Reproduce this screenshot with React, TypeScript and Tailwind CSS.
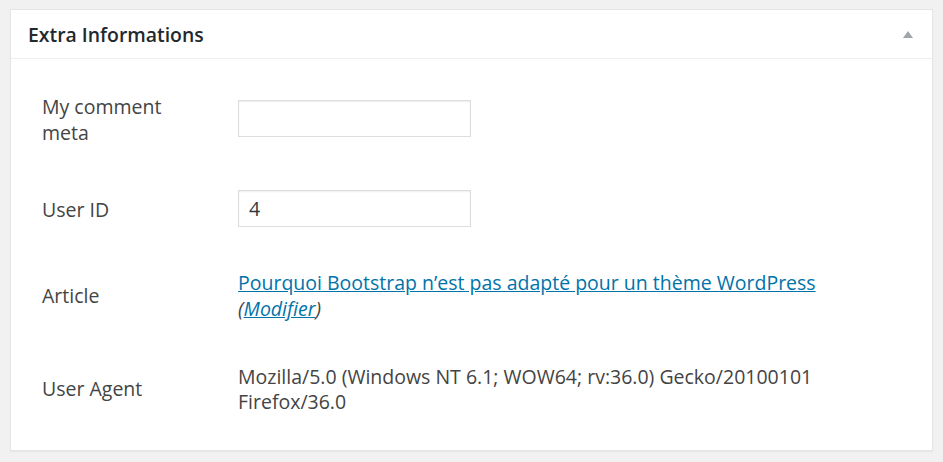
export default function App() {
  const font = { fontFamily: '"Open Sans", "Noto Sans", sans-serif' };

  return (
    <div className="min-h-[462px] w-[943px] bg-[#f1f1f1] pt-[9px] pl-[10px]" style={font}>
      <div className="w-[923px] h-[442px] border border-[#e5e5e5] bg-white shadow-[0_1px_1px_rgba(0,0,0,0.04)]">
        {/* header */}
        <div className="flex h-[49px] items-center justify-between border-b border-[#eeeeee] pl-[17px] pr-[19px] pt-[1px]">
          <h2 className="text-[19.4px] font-semibold text-[#23282d]">Extra Informations</h2>
          <span className="block h-0 w-0 border-x-[5px] border-b-[7px] border-x-transparent border-b-[#a0a5aa]" />
        </div>

        {/* fields */}
        <div className="pt-[14px] pl-[31px] text-[19.5px] text-[#444444]">
          <div className="grid h-[90px] grid-cols-[196px_1fr] items-center">
            <div className="w-[150px] pt-[4px] leading-[26px]">My comment meta</div>
            <input
              type="text"
              className="h-[37px] w-[233px] border border-[#dddddd] bg-white px-[10px] text-[19.5px] text-[#32373c] shadow-[inset_0_1px_2px_rgba(0,0,0,0.07)] outline-none"
            />
          </div>
          <div className="grid h-[90px] grid-cols-[196px_1fr] items-center">
            <div className="pt-[4px] leading-[26px]">User ID</div>
            <input
              type="text"
              defaultValue="4"
              className="h-[37px] w-[233px] border border-[#dddddd] bg-white px-[10px] text-[19.5px] text-[#32373c] shadow-[inset_0_1px_2px_rgba(0,0,0,0.07)] outline-none"
            />
          </div>
          <div className="grid h-[85px] grid-cols-[196px_1fr] items-center">
            <div className="leading-[26px]">Article</div>
            <div className="leading-[26px]">
              <a href="#" className="text-[#0073aa] underline">
                Pourquoi Bootstrap n’est pas adapté pour un thème WordPress
              </a>
              <br />
              <span className="italic">
                (<a href="#" className="text-[#0073aa] underline">Modifier</a>)
              </span>
            </div>
          </div>
          <div className="grid h-[102px] grid-cols-[196px_1fr] items-center">
            <div className="leading-[26px]">User Agent</div>
            <div className="w-[620px] leading-[25px]">
              Mozilla/5.0 (Windows NT 6.1; WOW64; rv:36.0) Gecko/20100101 Firefox/36.0
            </div>
          </div>
        </div>
      </div>
    </div>
  );
}
